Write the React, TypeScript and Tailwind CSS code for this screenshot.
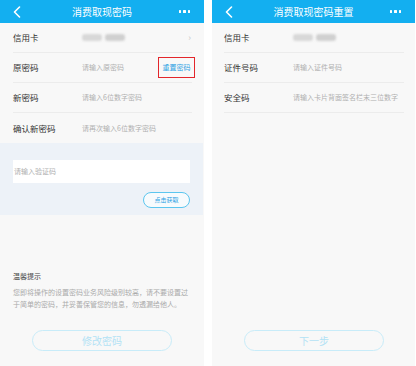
import React from "react";

const font = { fontFamily: '"Noto Sans CJK SC", "Noto Sans", sans-serif' };

function Header({ title }: { title: string }) {
  return (
    <div className="relative h-[23px] bg-[#13aff0] flex items-center justify-between px-[12px] shrink-0">
      <svg width="8" height="12" viewBox="0 0 8 12" className="ml-[1px]">
        <polyline points="6.5,1 1.5,6 6.5,11" fill="none" stroke="#fff" strokeWidth="1.6" strokeLinecap="round" strokeLinejoin="round" />
      </svg>
      <div className="absolute inset-0 flex items-center justify-center text-white text-[10px] leading-none">{title}</div>
      <div className="flex gap-[2px] mr-[2px]">
        <span className="w-[2.5px] h-[2.5px] bg-white rounded-[0.5px]" />
        <span className="w-[2.5px] h-[2.5px] bg-white rounded-[0.5px]" />
        <span className="w-[2.5px] h-[2.5px] bg-white rounded-[0.5px]" />
      </div>
    </div>
  );
}

function Row({ label, children, border = true }: { label: string; children: React.ReactNode; border?: boolean }) {
  return (
    <div className={`h-[30px] flex items-center ${border ? "border-b border-[#ececec]" : ""}`}>
      <div className="w-[69px] text-[8.5px] text-[#333] leading-none shrink-0">{label}</div>
      <div className="flex-1 flex items-center">{children}</div>
    </div>
  );
}

const Ph = ({ t }: { t: string }) => <span className="text-[7px] text-[#b0b0b0] leading-none whitespace-nowrap">{t}</span>;

const Blur = () => (
  <div className="flex gap-[3px] items-center">
    <div className="w-[20px] h-[7px] bg-[#d8d8d8] rounded-[3px] blur-[1px]" />
    <div className="w-[20px] h-[7px] bg-[#d0d0d0] rounded-[3px] blur-[1px]" />
  </div>
);

export default function App() {
  return (
    <div className="w-[416px] h-[366px] bg-white flex gap-[8px]" style={font}>
      <div className="w-[204px] h-[366px] bg-[#f8f8f8] flex flex-col">
        <Header title="消费取现密码" />
        <div className="mx-[13px] mr-[12px]">
          <Row label="信用卡">
            <Blur />
            <span className="ml-auto text-[9px] text-[#c8c8c8] leading-none mr-[1px]">›</span>
          </Row>
          <Row label="原密码">
            <Ph t="请输入原密码" />
            <div className="ml-auto -mr-[3px] w-[37px] h-[21px] border border-[#e3262b] flex items-center justify-center">
              <span className="text-[7px] text-[#2aa0e3] leading-none">重置密码</span>
            </div>
          </Row>
          <Row label="新密码">
            <Ph t="请输入6位数字密码" />
          </Row>
          <Row label="确认新密码" border={false}>
            <Ph t="请再次输入6位数字密码" />
          </Row>
        </div>
        <div className="h-[72px] bg-[#edf2f8] px-[13px] mr-[1px] pt-[17px] flex flex-col">
          <div className="h-[23px] bg-white flex items-center pl-[1px]">
            <Ph t="请输入验证码" />
          </div>
          <div className="mt-[9px] self-end w-[47px] h-[16px] rounded-full border border-[#5cc6ef] bg-[#f7fbfd] flex items-center justify-center">
            <span className="text-[6px] text-[#2aa0e3] leading-none">点击获取</span>
          </div>
        </div>
        <div className="mt-[55px] px-[13px] text-[7px] text-[#444] leading-[12px]">温馨提示</div>
        <div className="mt-[4px] px-[13px] text-[7px] text-[#aaa] leading-[12px] whitespace-nowrap">
          <div>您即将操作的设置密码业务风险级别较高，请不要设置过</div>
          <div>于简单的密码，并妥善保管您的信息，勿透漏给他人。</div>
        </div>
        <div className="mt-auto mb-[15px] ml-[32px] w-[140px] h-[21px] rounded-full border border-[#c8ecf9] flex items-center justify-center">
          <span className="text-[10px] text-[#b3e2f5] leading-none">修改密码</span>
        </div>
      </div>
      <div className="w-[203px] h-[366px] bg-[#f8f8f8] flex flex-col">
        <Header title="消费取现密码重置" />
        <div className="ml-[12px] mr-[11px]">
          <Row label="信用卡">
            <Blur />
          </Row>
          <Row label="证件号码">
            <Ph t="请输入证件号码" />
          </Row>
          <Row label="安全码">
            <Ph t="请输入卡片背面签名栏末三位数字" />
          </Row>
        </div>
        <div className="mt-auto mb-[15px] ml-[32px] w-[140px] h-[21px] rounded-full border border-[#c8ecf9] flex items-center justify-center">
          <span className="text-[10px] text-[#b3e2f5] leading-none">下一步</span>
        </div>
      </div>
    </div>
  );
}
